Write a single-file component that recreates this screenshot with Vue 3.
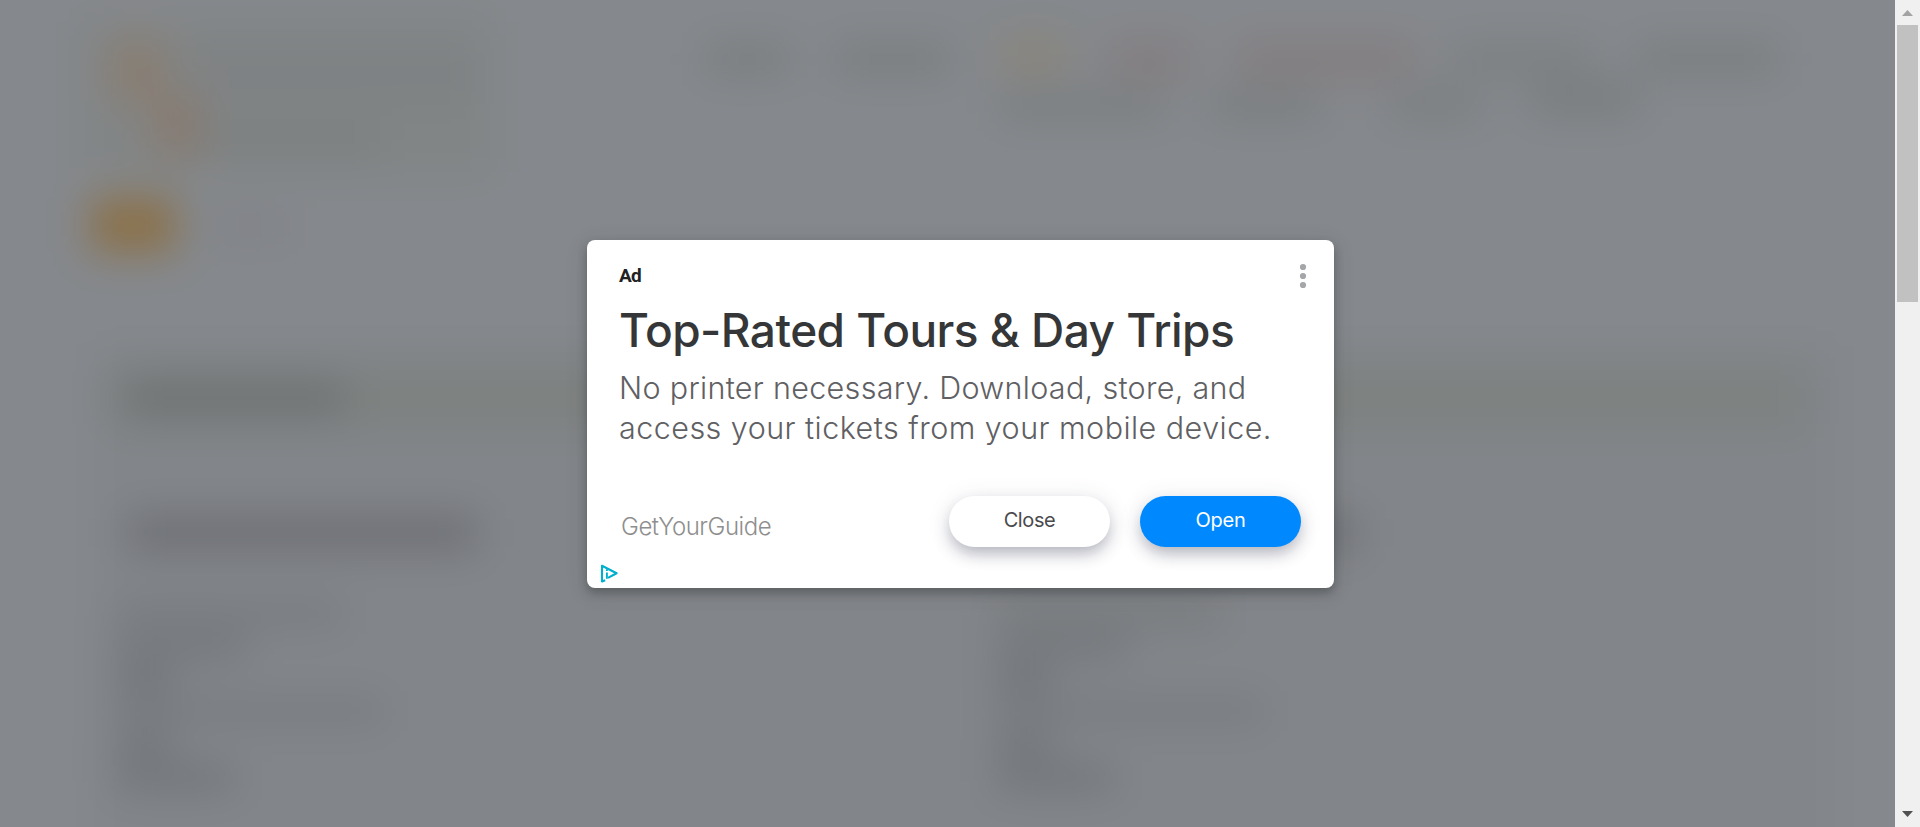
<script setup>
// x, y, width, height, colour of each shape behind the frosted backdrop
const shapes = [
  [95, 345, 1740, 560, '#828589'],
  [85, 22, 405, 150, '#828585'],
  [190, 45, 280, 60, '#7f8284'],
  [190, 125, 190, 30, '#7d8080'],
  [112, 40, 50, 60, '#8a7d70'],
  [154, 92, 44, 66, '#887b70'],
  [91, 198, 84, 54, '#8b7047'],
  [210, 215, 80, 22, '#7f8186'],
  [705, 45, 85, 28, '#7a7d7f'],
  [835, 45, 115, 28, '#7a7d7f'],
  [1000, 38, 68, 34, '#8a857a'],
  [1108, 45, 82, 30, '#837b7d'],
  [1238, 45, 175, 30, '#837b7d'],
  [1450, 45, 142, 28, '#7c7f81'],
  [1636, 45, 142, 28, '#7a7d7f'],
  [1000, 90, 165, 28, '#7a7e80'],
  [1210, 90, 110, 28, '#797d7f'],
  [1390, 90, 90, 28, '#7a7e80'],
  [1530, 84, 108, 30, '#797c7e'],
  [112, 372, 1690, 52, '#7d817f'],
  [126, 383, 218, 30, '#6d7071'],
  [128, 516, 348, 34, '#6c6e73'],
  [1008, 516, 348, 34, '#6c6e73'],
  [117, 603, 225, 20, '#75787c'],
  [117, 637, 130, 20, '#707377'],
  [117, 669, 55, 22, '#6e7175'],
  [117, 701, 267, 20, '#75787c'],
  [117, 733, 54, 22, '#6e7175'],
  [117, 767, 117, 22, '#6e7175'],
  [997, 603, 225, 20, '#75787a'],
  [997, 637, 130, 20, '#707377'],
  [997, 669, 55, 22, '#6e7175'],
  [997, 701, 267, 20, '#75787c'],
  [997, 733, 54, 22, '#6e7175'],
  [997, 767, 117, 22, '#6e7175']
]
</script>

<template>
  <div class="screen">
    <main class="backdrop">
      <svg class="haze" width="1895" height="827" viewBox="0 0 1895 827" aria-hidden="true">
        <defs>
          <filter id="soft" filterUnits="userSpaceOnUse" x="-100" y="-100" width="2100" height="1100" color-interpolation-filters="sRGB">
            <feGaussianBlur stdDeviation="20" />
          </filter>
        </defs>
        <g filter="url(#soft)">
          <rect x="-100" y="-100" width="2100" height="1100" fill="#85888c" />
          <rect v-for="(s, i) in shapes" :key="i" :x="s[0]" :y="s[1]" :width="s[2]" :height="s[3]" :fill="s[4]" />
        </g>
      </svg>
      <section class="card">
        <header class="top">
          <span class="tag">Ad</span>
          <svg class="more" width="8" height="26" viewBox="0 0 8 26" fill="#a5a6a9">
            <circle cx="4" cy="4" r="3.1" /><circle cx="4" cy="13" r="3.1" /><circle cx="4" cy="22" r="3.1" />
          </svg>
        </header>
        <h1>Top-Rated Tours &amp; Day Trips</h1>
        <p class="copy"><span class="l1">No printer necessary. Download, store, and</span><br /><span class="l2">access your tickets from your mobile device.</span></p>
        <footer class="foot">
          <span class="brand">GetYourGuide</span>
          <button class="btn">Close</button>
          <button class="btn open">Open</button>
        </footer>
        <svg class="choices" width="19" height="19" viewBox="0 0 19 19">
          <path d="M5.2 16.2 L2 17.4 V1.8 L16.6 9.3 L8 13.9" fill="none" stroke="#00aecd" stroke-width="2.1" stroke-linejoin="round" />
          <path d="M6.9 5.2v1.8M6.9 8.4v6.4" stroke="#00aecd" stroke-width="1.9" />
        </svg>
      </section>
    </main>
    <aside class="scroll">
      <svg class="arrow" width="25" height="25" viewBox="0 0 25 25"><path d="M7 16 L12.5 10 L18 16Z" fill="#a3a3a3" /></svg>
      <div class="thumb"></div>
      <svg class="arrow end" width="25" height="25" viewBox="0 0 25 25"><path d="M7 9 L12.5 15 L18 9Z" fill="#505050" /></svg>
    </aside>
  </div>
</template>

<style>
body { margin: 0; overflow: hidden; }
</style>

<style scoped>
.screen { display: flex; width: 1920px; height: 827px; overflow: hidden; font-family: Inter, "Liberation Sans", sans-serif; }
.backdrop { position: relative; flex: 1; background: #85888c; }
.haze { position: absolute; left: 0; top: 0; }
.card { position: relative; box-sizing: border-box; width: 747px; height: 348px; margin: 240px 0 0 587px; padding: 0 33px 0 32px; background: #fff; border-radius: 8px; box-shadow: 0 5px 10px rgba(50, 55, 57, .42), 0 4px 22px rgba(60, 64, 66, .14); }
.top { display: flex; justify-content: space-between; height: 58px; }
.tag { margin-top: 24px; font: 700 19px/24px Roboto, sans-serif; letter-spacing: -.8px; color: #212224; }
.more { margin: 23px -6px 0 0; }
h1 { margin: 0; height: 66px; font-size: 46px; font-weight: 500; line-height: 64px; letter-spacing: -.53px; color: #353637; white-space: nowrap; }
.copy { margin: 4px 0 0; height: 80px; font-size: 30.5px; font-weight: 300; line-height: 40px; color: #5f6063; white-space: nowrap; }
.l1 { letter-spacing: .31px; }
.l2 { letter-spacing: .46px; }
.foot { display: flex; align-items: flex-start; margin-top: 48px; }
.brand { flex: 1; padding: 15px 0 0 2px; font-weight: 300; font-size: 24px; line-height: 32px; letter-spacing: -.45px; color: #8e8e8e; }
.btn { width: 161px; height: 51px; padding: 0 0 3px; border: 0; border-radius: 26px; background: #fff; color: #4a4a4c; font-family: inherit; font-size: 20px; font-weight: 400; letter-spacing: -.4px; box-shadow: 0 8px 16px -2px rgba(60, 64, 90, .36), 0 2px 24px rgba(60, 64, 90, .1); }
.open { margin-left: 30px; background: #0088ff; color: #fff; letter-spacing: -.2px; }
.choices { position: absolute; left: 13px; top: 324px; }
.scroll { display: flex; flex-direction: column; width: 25px; background: #f0f0f0; }
.arrow { display: block; flex: none; }
.thumb { width: 21px; height: 277px; margin-left: 2px; background: #c1c1c1; }
.end { margin-top: auto; }
</style>
